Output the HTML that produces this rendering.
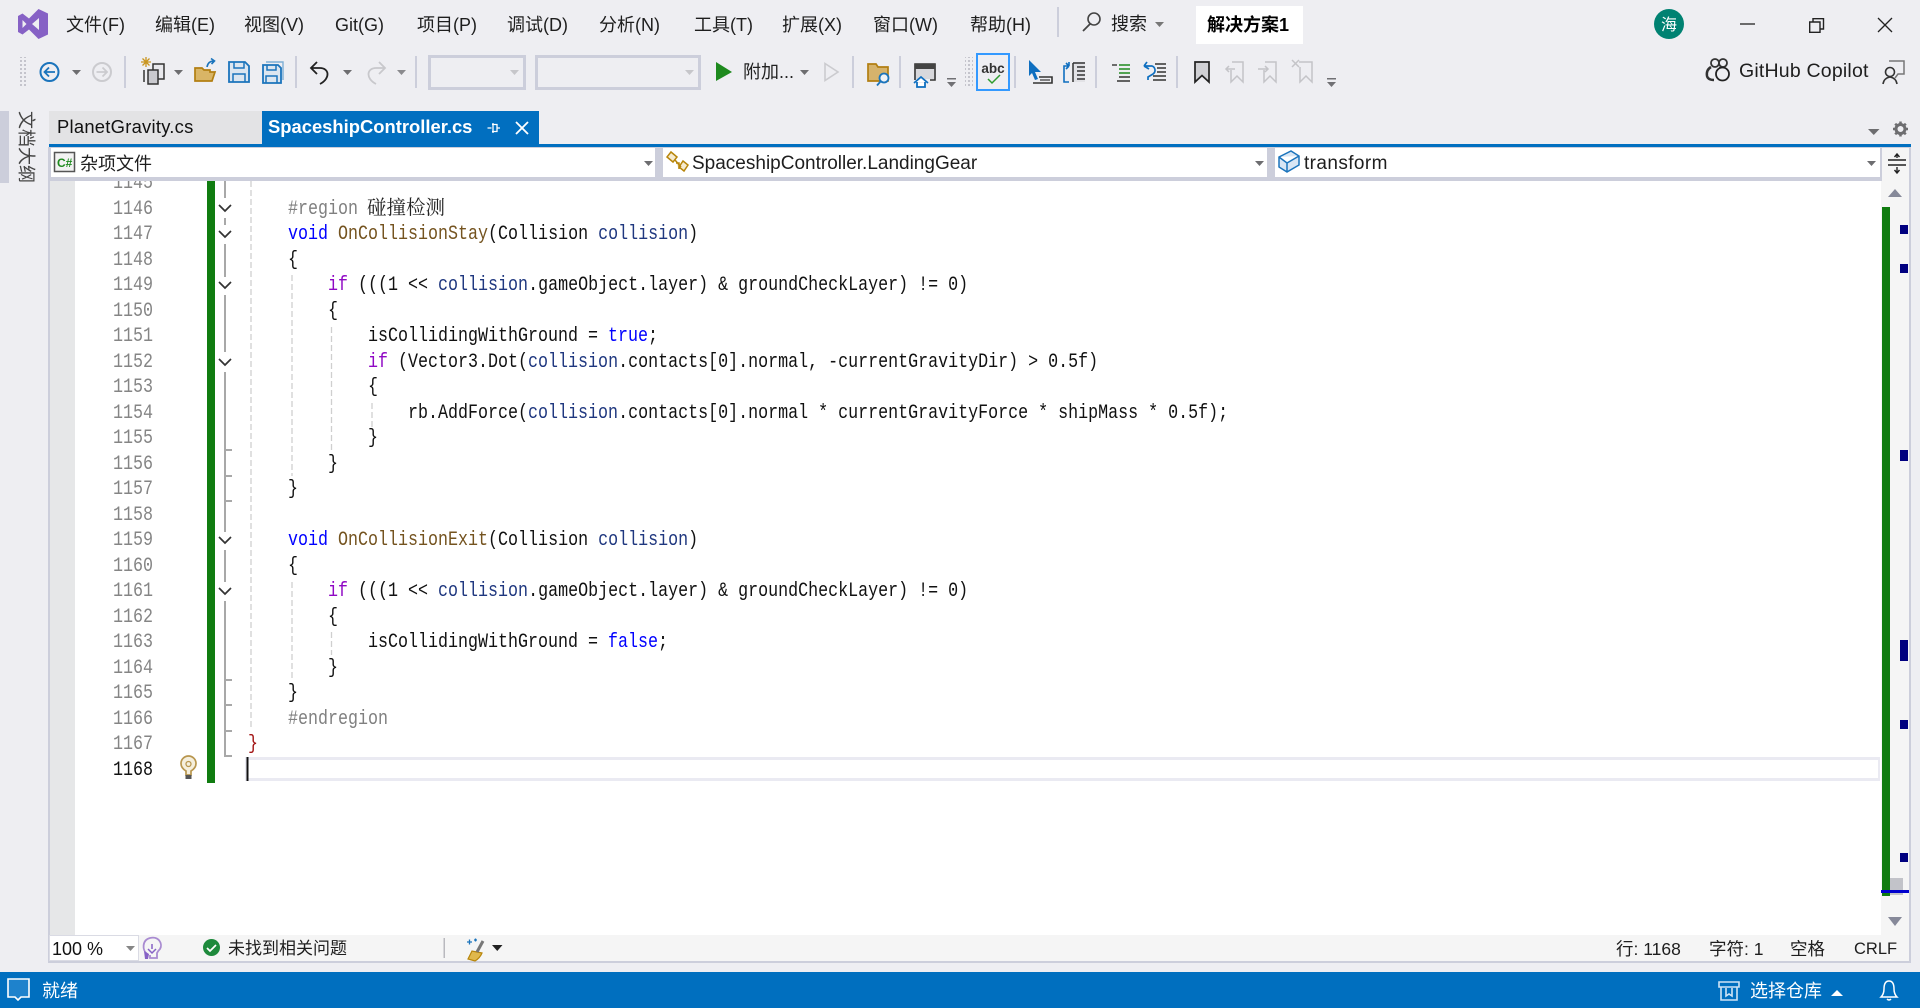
<!DOCTYPE html>
<html lang="zh-CN"><head><meta charset="utf-8"><title>Visual Studio</title>
<style>
html,body{margin:0;padding:0;width:1920px;height:1008px;overflow:hidden;background:#EEEEF2;}
body{position:relative;font-family:"Liberation Sans","Noto Sans CJK SC",sans-serif;font-size:18px;color:#1e1e1e;}
.t{position:absolute;white-space:nowrap;line-height:24px;height:24px;}
.b{position:absolute;}
#code,#nums{position:absolute;top:0;font-family:"Liberation Mono",monospace;font-size:20px;line-height:25.5px;white-space:pre;transform:scaleX(.8333);transform-origin:0 0;color:#111;}
#code{left:247.5px;width:2000px}
#nums{left:113px;color:#858585;}
#clip{position:absolute;left:0;top:181px;width:1881px;height:600px;overflow:hidden;}
.v{color:#0000FF}.k{color:#8F08C4}.m{color:#74531F}.p{color:#1F377F}.c{color:#808080}.r{color:#A31515}
svg{position:absolute;left:0;top:0;}
</style></head><body>
<!-- frames -->
<div class="b" style="left:0;top:111px;width:9px;height:72px;background:#CCCEDB"></div>
<div class="b" style="left:48px;top:147px;width:1863px;height:816px;background:#CCCEDB"></div>
<div class="b" style="left:49px;top:111px;width:213px;height:33px;background:#E3E3E5"></div>
<div class="b" style="left:262px;top:111px;width:277px;height:33px;background:#016FC0"></div>
<div class="b" style="left:49px;top:144px;width:1862px;height:3px;background:#016FC0"></div>
<div class="b" style="left:51px;top:148px;width:604px;height:29px;background:#fff"></div>
<div class="b" style="left:663px;top:148px;width:604px;height:29px;background:#fff"></div>
<div class="b" style="left:1275px;top:148px;width:605px;height:29px;background:#fff"></div>
<div class="b" style="left:1882px;top:148px;width:27px;height:33px;background:#F5F5F5"></div>
<div class="b" style="left:50px;top:181px;width:1831px;height:754px;background:#fff"></div>
<div class="b" style="left:50px;top:181px;width:25px;height:754px;background:#E6E7E8"></div>
<div class="b" style="left:1881px;top:181px;width:28px;height:754px;background:#F5F5F5"></div>
<div class="b" style="left:50px;top:935px;width:1859px;height:26px;background:#F5F5F5"></div>
<div class="b" style="left:50px;top:936px;width:88px;height:24px;background:#fff;box-shadow:0 0 0 1px #DADBE4"></div>
<div class="b" style="left:0;top:972px;width:1920px;height:36px;background:#006FBF"></div>
<div class="b" style="left:1196px;top:6px;width:107px;height:38px;background:#fff"></div>
<!-- current line -->
<div class="b" style="left:245px;top:757px;width:1630px;height:18px;border:3px solid #EAEAF2;border-right:2px solid #EAEAF2;"></div>
<div class="b" style="left:207px;top:181px;width:8px;height:602px;background:#107C10"></div>
<!-- code -->
<div id="clip">
<div id="nums" style="top:-10px">1145
1146
1147
1148
1149
1150
1151
1152
1153
1154
1155
1156
1157
1158
1159
1160
1161
1162
1163
1164
1165
1166
1167
<span style="color:#111">1168</span></div>
<div id="code" style="top:-10px">
    <span class="c">#region</span>
    <span class="v">void</span> <span class="m">OnCollisionStay</span>(Collision <span class="p">collision</span>)
    {
        <span class="k">if</span> (((1 &lt;&lt; <span class="p">collision</span>.gameObject.layer) &amp; groundCheckLayer) != 0)
        {
            isCollidingWithGround = <span class="v">true</span>;
            <span class="k">if</span> (Vector3.Dot(<span class="p">collision</span>.contacts[0].normal, -currentGravityDir) &gt; 0.5f)
            {
                rb.AddForce(<span class="p">collision</span>.contacts[0].normal * currentGravityForce * shipMass * 0.5f);
            }
        }
    }

    <span class="v">void</span> <span class="m">OnCollisionExit</span>(Collision <span class="p">collision</span>)
    {
        <span class="k">if</span> (((1 &lt;&lt; <span class="p">collision</span>.gameObject.layer) &amp; groundCheckLayer) != 0)
        {
            isCollidingWithGround = <span class="v">false</span>;
        }
    }
    <span class="c">#endregion</span>
<span class="r">}</span>
</div>
</div>
<div class="t" style="left:367px;top:194px;font-size:19.5px;color:#222;font-family:'Noto Serif CJK SC','Noto Sans CJK SC',serif">碰撞检测</div>

<!-- menu -->
<div class="t" style="left:66px;top:13px">文件(F)</div>
<div class="t" style="left:155px;top:13px">编辑(E)</div>
<div class="t" style="left:244px;top:13px">视图(V)</div>
<div class="t" style="left:335px;top:13px">Git(G)</div>
<div class="t" style="left:417px;top:13px">项目(P)</div>
<div class="t" style="left:507px;top:13px">调试(D)</div>
<div class="t" style="left:599px;top:13px">分析(N)</div>
<div class="t" style="left:694px;top:13px">工具(T)</div>
<div class="t" style="left:782px;top:13px">扩展(X)</div>
<div class="t" style="left:873px;top:13px">窗口(W)</div>
<div class="t" style="left:970px;top:13px">帮助(H)</div>
<div class="t" style="left:1111px;top:12px">搜索</div>
<div class="t" style="left:1207px;top:13px;font-weight:700;color:#000">解决方案1</div>
<div class="t" style="left:743px;top:60px;color:#222">附加...</div>
<div class="t" style="left:1739px;top:59px;font-size:19.5px;letter-spacing:.2px;color:#1e1e1e">GitHub Copilot</div>
<!-- tabs -->
<div class="t" style="left:57px;top:115px;color:#111;font-size:18.4px;letter-spacing:.25px">PlanetGravity.cs</div>
<div class="t" style="left:268px;top:115px;color:#fff;font-weight:700;font-size:18.4px">SpaceshipController.cs</div>
<!-- nav -->
<div class="t" style="left:80px;top:152px">杂项文件</div>
<div class="t" style="left:692px;top:152px;font-size:19px">SpaceshipController.LandingGear</div>
<div class="t" style="left:1304px;top:152px;font-size:19px;letter-spacing:.4px">transform</div>
<div class="t" style="left:16px;top:111px;writing-mode:vertical-rl;text-orientation:sideways;height:72px;width:20px;line-height:20px;color:#444;font-size:18px">文档大纲</div>
<!-- bottom -->
<div class="t" style="left:52px;top:937px;color:#111">100 %</div>
<div class="t" style="left:228px;top:937px;font-size:17px">未找到相关问题</div>
<div class="t" style="left:1616px;top:937px;font-size:17.5px">行: 1168</div>
<div class="t" style="left:1709px;top:937px;font-size:17.5px">字符: 1</div>
<div class="t" style="left:1790px;top:937px;font-size:17.5px">空格</div>
<div class="t" style="left:1854px;top:937px;font-size:16.5px">CRLF</div>
<div class="t" style="left:42px;top:979px;color:#fff">就绪</div>
<div class="t" style="left:1750px;top:979px;color:#fff">选择仓库</div>

<svg width="1920" height="1008" viewBox="0 0 1920 1008" fill="none">
<defs><pattern id="g" width="4" height="4" patternUnits="userSpaceOnUse"><rect width="2" height="2" fill="#C4C4CC"/></pattern></defs>
<!-- logo -->
<path fill-rule="evenodd" fill="#8661C5" d="M38.5 9L48 13.5V34.5L38.5 39L29 29.5L22.5 34.5L18 32V16L22.5 13.5L29 18.5ZM39 18L32 24L39 30ZM22.5 20V28L26.5 24Z"/>
<!-- title seps/search -->
<rect x="1057" y="7" width="2" height="30" fill="#CCCEDB"/>
<circle cx="1094" cy="19" r="6" stroke="#444" stroke-width="1.6"/><path d="M1090 24L1083 31" stroke="#444" stroke-width="1.8"/>
<path d="M1155 22h9l-4.500 5z" fill="#777"/>
<circle cx="1669" cy="24" r="15" fill="#008272"/>
<text x="1669" y="30" text-anchor="middle" font-family="Noto Sans CJK SC" font-size="16" fill="#fff">海</text>
<path d="M1740 24h15" stroke="#222" stroke-width="1.3"/>
<path d="M1809.700 22h10.300v10.300h-10.300zM1813 22v-3.300h10.500v10.300h-3.500" stroke="#222" stroke-width="1.4"/>
<path d="M1878 18l14 14M1892 18l-14 14" stroke="#222" stroke-width="1.3"/>
<!-- grippers -->
<rect x="18" y="57" width="8" height="29" fill="url(#g)"/>
<rect x="965" y="57" width="8" height="29" fill="url(#g)"/>
<!-- toolbar seps -->
<g fill="#CCCEDB"><rect x="124" y="56" width="2" height="32"/><rect x="295" y="56" width="2" height="32"/><rect x="415" y="56" width="2" height="32"/><rect x="852" y="56" width="2" height="32"/><rect x="899" y="56" width="2" height="32"/><rect x="1014" y="56" width="2" height="32"/><rect x="1095" y="56" width="2" height="32"/><rect x="1176" y="56" width="2" height="32"/></g>
<!-- back/forward -->
<circle cx="49.500" cy="72" r="9" stroke="#1B74BC" stroke-width="2"/><path d="M55 72H44.500M49 67.500L44.500 72L49 76.500" stroke="#1B74BC" stroke-width="1.800"/>
<circle cx="102" cy="72" r="9" stroke="#CBCBCF" stroke-width="2"/><path d="M96.500 72H107M102.500 67.500L107 72L102.500 76.500" stroke="#CBCBCF" stroke-width="1.800"/>
<g fill="#6D6D70"><path d="M72 70h9l-4.500 5z"/><path d="M174 70h9l-4.500 5z"/><path d="M343 70h9l-4.500 5z"/><path d="M800 70h9l-4.500 5z"/></g>
<path d="M397 70h9l-4.500 5z" fill="#8a8a8e"/>
<!-- new project -->
<path d="M146 57v10M141 62h10M142.500 58.500l7 7M149.500 58.500l-7 7" stroke="#C9951F" stroke-width="1.300"/>
<rect x="153" y="64" width="11" height="15" fill="#E8E8EC" stroke="#333" stroke-width="1.500"/>
<rect x="148" y="70" width="10" height="14" fill="#C9C9CE" stroke="#333" stroke-width="1.500"/>
<path d="M144 70v12" stroke="#333" stroke-width="1.500"/>
<!-- open -->
<path d="M195 81V68h7l2 2h6v2h5l-3 9z" fill="#D9B566" stroke="#B27F12" stroke-width="1.700"/>
<path d="M207 67q1-6 7-6M211 58.500l3.500 2.500l-3 3" stroke="#1B74BC" stroke-width="1.600"/>
<!-- save -->
<path d="M229 62h16l4 4v16h-20z" fill="#DCE6F0" stroke="#1B74BC" stroke-width="1.800"/>
<path d="M234 62v6h10v-6M233 82v-8h12v8" stroke="#1B74BC" stroke-width="1.500"/>
<path d="M266 62h17v18" stroke="#7FAFD6" stroke-width="1.400"/>
<path d="M263 65h15l3 3v15h-18z" fill="#DCE6F0" stroke="#1B74BC" stroke-width="1.800"/>
<path d="M267 65v5h9v-5M266 83v-7h11v7" stroke="#1B74BC" stroke-width="1.500"/>
<!-- undo/redo -->
<path d="M317 62L311 68L317 74M311 68H320C329 68 331 78 320 84" stroke="#222" stroke-width="1.800"/>
<path d="M379 62L385 68L379 74M385 68H376C367 68 365 78 376 84" stroke="#C8C8CC" stroke-width="1.800"/>
<!-- combos -->
<rect x="429.500" y="56.500" width="95" height="32" stroke="#CCCEDB" stroke-width="3"/>
<rect x="536.500" y="56.500" width="163" height="32" stroke="#CCCEDB" stroke-width="3"/>
<path d="M510 70h9l-4.500 5zM685 70h9l-4.500 5z" fill="#C6C6CA"/>
<!-- play -->
<path d="M716 62L732 72L716 81z" fill="#1E8A1E"/>
<path d="M825 63.500L838 72L825 80.500z" stroke="#CBCBCF" stroke-width="1.600"/>
<!-- folder search -->
<path d="M868 64h8l2 3h10v14h-20z" fill="#D6B36C" stroke="#B27F12" stroke-width="1.700"/>
<circle cx="884" cy="78" r="4.500" fill="#EEF2F6" stroke="#1B74BC" stroke-width="1.800"/><path d="M880.500 81.500L877 85.500" stroke="#1B74BC" stroke-width="1.800"/>
<!-- home window -->
<path d="M915 80V64h20v16h-5" stroke="#333" stroke-width="1.600"/><rect x="915" y="64" width="20" height="5" fill="#444"/><rect x="916" y="69" width="18" height="10" fill="#D8D8DC"/>
<path d="M914 83L921 77L928 83M917 82v5h8v-5" fill="#fff" stroke="#0F6FC0" stroke-width="1.800"/>
<g fill="#707074"><rect x="947" y="78" width="9" height="1.500"/><path d="M947 82h9l-4.500 5z"/><rect x="1327" y="78" width="9" height="1.500"/><path d="M1327 82h9l-4.500 5z"/></g>
<!-- abc -->
<rect x="977" y="54" width="32" height="36" stroke="#3399FF" stroke-width="2"/>
<text x="993" y="73" text-anchor="middle" font-family="Liberation Sans" font-weight="700" font-size="13.500" fill="#333">abc</text>
<path d="M988 79l4 4l8-8" stroke="#2E9B2E" stroke-width="1.500"/>
<!-- cursor -->
<path d="M1029 60L1041 72L1035 72L1038 79L1035 80L1032 73L1029 76z" fill="#0F6FC0"/>
<path d="M1033 83h19v-6h-13" stroke="#333" stroke-width="1.600"/><path d="M1040 80h10" stroke="#333" stroke-width="1.200"/>
<path d="M1069 66h-5v16h5M1069 66l-3-3M1069 66l-3 3M1069 62v4" stroke="#0F6FC0" stroke-width="1.600"/>
<path d="M1073 62h12v20h-12z" fill="#E2E2E6"/><path d="M1073 63h12M1077 67h8M1077 71h8M1077 75h8M1077 79h8M1073 63v19" stroke="#333" stroke-width="1.500"/>
<!-- indent -->
<path d="M1112 65h5" stroke="#333" stroke-width="1.400"/><path d="M1119 65h11M1119 69h11M1119 73h11" stroke="#1E8A1E" stroke-width="1.600"/><path d="M1119 77h11M1117 81h13" stroke="#333" stroke-width="1.400"/>
<path d="M1144 66l3-4M1144 66l5 3M1144 66h8a4.500 4.500 0 0 1 1 8l-5 3v3" stroke="#0F6FC0" stroke-width="1.700"/>
<path d="M1155 64h11M1157 68h9M1157 72h9M1153 76h13M1153 80h13" stroke="#333" stroke-width="1.400"/>
<!-- bookmarks -->
<path d="M1195 62h14v20l-7-6.500l-7 6.500z" fill="#D0D0D4" stroke="#222" stroke-width="1.700"/>
<g stroke="#C4C4C8" stroke-width="1.500"><path d="M1232 62h11v20l-6-6l-6 6v-12M1226 69h9M1229 66l-3 3l3 3"/><path d="M1265 62h11v20l-6-6l-6 6v-12M1258 69h10M1265 66l3 3l-3 3"/><path d="M1299 62h13v20l-6-6l-6 6v-15M1292 60l7 7M1299 60l-7 7"/></g>
<!-- copilot -->
<circle cx="1715" cy="63" r="4" stroke="#333" stroke-width="1.800"/><circle cx="1723" cy="63" r="4" stroke="#333" stroke-width="1.800"/>
<path d="M1711 67q-5 3-4 9q1 4 7 4M1719 68l6 1" stroke="#333" stroke-width="2.500"/>
<circle cx="1722.500" cy="74" r="6.500" fill="#EEEEF2" stroke="#222" stroke-width="1.800"/>
<!-- feedback -->
<path d="M1889 61h15v13h-6l-3 4" stroke="#777" stroke-width="1.500"/>
<circle cx="1890" cy="72" r="4.500" fill="#EEEEF2" stroke="#333" stroke-width="1.600"/><path d="M1883 84q1-6 7-7q6 1 7 7" stroke="#333" stroke-width="1.600"/>
<!-- tab icons -->
<path d="M493 123v10M487.500 128h4M492 124.500h5v7h-5M497 128h3" stroke="#fff" stroke-width="1.300"/>
<path d="M516 122l12 12M528 122l-12 12" stroke="#fff" stroke-width="1.800"/>
<path d="M1868 129h11.500l-5.750 6z" fill="#6D6D70"/>
<g transform="translate(1900.500 129)"><circle r="4.500" stroke="#6D6D70" stroke-width="3"/><path d="M0-7.500V-5M0 7.500V5M-7.500 0H-5M7.500 0H5M-5.300-5.300L-3.500-3.500M5.300 5.300L3.500 3.500M-5.300 5.300L-3.500 3.500M5.300-5.300L3.500-3.500" stroke="#6D6D70" stroke-width="2.500"/></g>
<!-- nav icons -->
<rect x="54.500" y="152.500" width="20" height="19" fill="#F2F2F2" stroke="#555" stroke-width="1.500"/>
<text x="57" y="167" font-family="Liberation Sans" font-weight="700" font-size="12" fill="#1E8A1E">C#</text>
<path d="M644 161h9l-4.500 5zM1255 161h9l-4.500 5zM1867 161h9l-4.500 5z" fill="#6D6D70"/>
<path d="M671 152l6 5l-4 5l-6-5zM683 161l5 4l-4 6l-5-4zM675 160l6 7M676 163h3v6" stroke="#B8860B" stroke-width="1.500" fill="#F6EBD0"/>
<path d="M1279 157l12-6l8 5v9l-12 7l-8-5zM1279 157l8 6l12-7M1287 163v9" stroke="#1B74BC" stroke-width="1.500" fill="#D8E6F4"/>
<path d="M1888 160h18M1888 165h18" stroke="#222" stroke-width="1.600"/><path d="M1897 154v4M1897 167v5M1894.500 157l2.500-3l2.500 3M1894.500 170l2.500 3l2.500-3" stroke="#222" stroke-width="1.400"/>
<!-- outline -->
<g stroke="#A8A8A8" stroke-width="2">
<path d="M225 181V198M225 218V225M225 244V277M225 295V352M225 372V532M225 550V582M225 601V757"/>
<path d="M225 450H232M225 476H232M225 501H232M225 680H232M225 705H232M225 731H232M225 756H232"/>
</g>
<g stroke="#333" stroke-width="1.700"><path d="M219 205L225 211L231 205M219 231L225 237L231 231M219 282L225 288L231 282M219 359L225 365L231 359M219 537L225 543L231 537M219 588L225 594L231 588"/></g>
<!-- indent guides -->
<g stroke="#CFCFCF" stroke-width="1.300" stroke-dasharray="6 3">
<path d="M251 181V730M292 275V476M292 582V680M331.500 327V450M331.500 632V655M372 403V427"/>
</g>
<!-- caret -->
<rect x="246.500" y="757" width="2" height="24" fill="#111"/>
<!-- bulb -->
<path d="M186 775v-4q-5-3-5-7.500a7.500 7.500 0 0 1 15 0q0 4.500-5 7.500v4z" stroke="#B8964E" stroke-width="1.700" fill="#F5EFDD"/><circle cx="188.500" cy="764" r="2.500" stroke="#B8964E" stroke-width="1.300"/>
<rect x="185.500" y="775" width="6" height="4" fill="#555"/>
<!-- scrollbar -->
<path d="M1888 197L1895 189L1902 197z" fill="#868999"/>
<path d="M1888 917H1902L1895 926z" fill="#868999"/>
<rect x="1882" y="207" width="8" height="689" fill="#107C10"/>
<g fill="#00007F"><rect x="1900" y="225" width="8" height="9"/><rect x="1900" y="264" width="8" height="9"/><rect x="1900" y="450" width="8" height="11"/><rect x="1900" y="640" width="8" height="21"/><rect x="1900" y="720" width="8" height="9"/><rect x="1900" y="853" width="8" height="9"/></g>
<rect x="1890" y="878" width="13" height="17" fill="#C2C3C9"/>
<rect x="1881" y="890" width="28" height="3" fill="#0000CD"/>
<!-- bottom icons -->
<path d="M126 946h9l-4.500 5z" fill="#868686"/>
<path d="M147 954c-5-4-5-14 3-16c9-2 13 6 10 11q-2 2-3 4v5h-7v-3" stroke="#A98BD1" stroke-width="1.800"/><path d="M152 944v5M148 949l4 4l4-4" stroke="#8661C5" stroke-width="1.500"/><path d="M144 951l5 3l-1 5l-3 0z" fill="#8661C5"/>
<circle cx="211.500" cy="947.500" r="8.500" fill="#1E8A3C"/><path d="M207 948l3 3l6-6" stroke="#fff" stroke-width="1.700"/>
<rect x="443.500" y="938" width="1.500" height="20" fill="#B9B9BE"/>
<path d="M472 951l-4 8l7 2q5-3 7-8z" fill="#E0B84C" stroke="#B8860B" stroke-width="1.200"/><path d="M477 952L483 941" stroke="#777" stroke-width="3"/>
<path d="M467 942h5M469.500 939.500v5M474 940h3M475.500 938.500v3" stroke="#1B74BC" stroke-width="1.300"/>
<path d="M492 945h10.500l-5.250 6z" fill="#222"/>
<!-- status icons -->
<path d="M8 979h21v18h-8l-3 3l-3-3h-7z" fill="#1E82CC" stroke="#fff" stroke-width="1.600"/>
<path d="M1719 982h20v5h-20zM1721 987v13h16v-13M1726 988v8l3-2l3 2v-8" stroke="#CFE4F5" stroke-width="1.600"/>
<path d="M1831 996L1837 990L1843 996z" fill="#fff"/>
<path d="M1881 997q3-3 3-8q0-8 5-8q5 0 5 8q0 5 3 8zM1887 999q2 2 4 0" stroke="#fff" stroke-width="1.500"/>
</svg>
</body></html>
